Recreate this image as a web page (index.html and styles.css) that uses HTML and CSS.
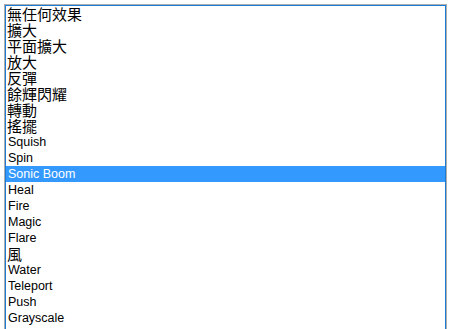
FILE: index.html
```html
<!DOCTYPE html>
<html>
<head>
<meta charset="utf-8">
<link rel="stylesheet" href="styles.css">
</head>
<body>
<div class="listbox">
  <ul class="items">
    <li class="item cjk">無任何效果</li>
    <li class="item cjk">擴大</li>
    <li class="item cjk">平面擴大</li>
    <li class="item cjk">放大</li>
    <li class="item cjk">反彈</li>
    <li class="item cjk">餘輝閃耀</li>
    <li class="item cjk">轉動</li>
    <li class="item cjk">搖擺</li>
    <li class="item">Squish</li>
    <li class="item">Spin</li>
    <li class="item selected">Sonic Boom</li>
    <li class="item">Heal</li>
    <li class="item">Fire</li>
    <li class="item">Magic</li>
    <li class="item">Flare</li>
    <li class="item cjk">風</li>
    <li class="item">Water</li>
    <li class="item">Teleport</li>
    <li class="item">Push</li>
    <li class="item">Grayscale</li>
  </ul>
</div>
</body>
</html>
```
FILE: styles.css
```css
html, body {
  margin: 0;
  padding: 0;
  background: #ffffff;
  overflow: hidden;
  height: 329px;
}
.listbox {
  margin: 4px 0 0 4px;
  width: 443px;
  height: 340px;
  box-sizing: border-box;
  border: 1px solid #adadad;
  border-bottom: none;
  box-shadow: inset 1px 1px 0 #1c7cd5, inset -1px 0 0 #1c7cd5;
  padding: 1px 1px 0 1px;
  overflow: hidden;
  background: #ffffff;
}
.items {
  list-style: none;
  margin: 0;
  padding: 0;
}
.item {
  height: 16px;
  line-height: 16px;
  padding-left: 2px;
  font-family: "Liberation Sans", "Noto Sans CJK TC", sans-serif;
  font-size: 12.5px;
  color: #000000;
  white-space: nowrap;
}
.item.cjk {
  padding-left: 1px;
  font-family: "Noto Sans CJK TC", "Liberation Sans", sans-serif;
  font-size: 15px;
}
.item.selected {
  background: #3399ff;
  color: #ffffff;
}
```
